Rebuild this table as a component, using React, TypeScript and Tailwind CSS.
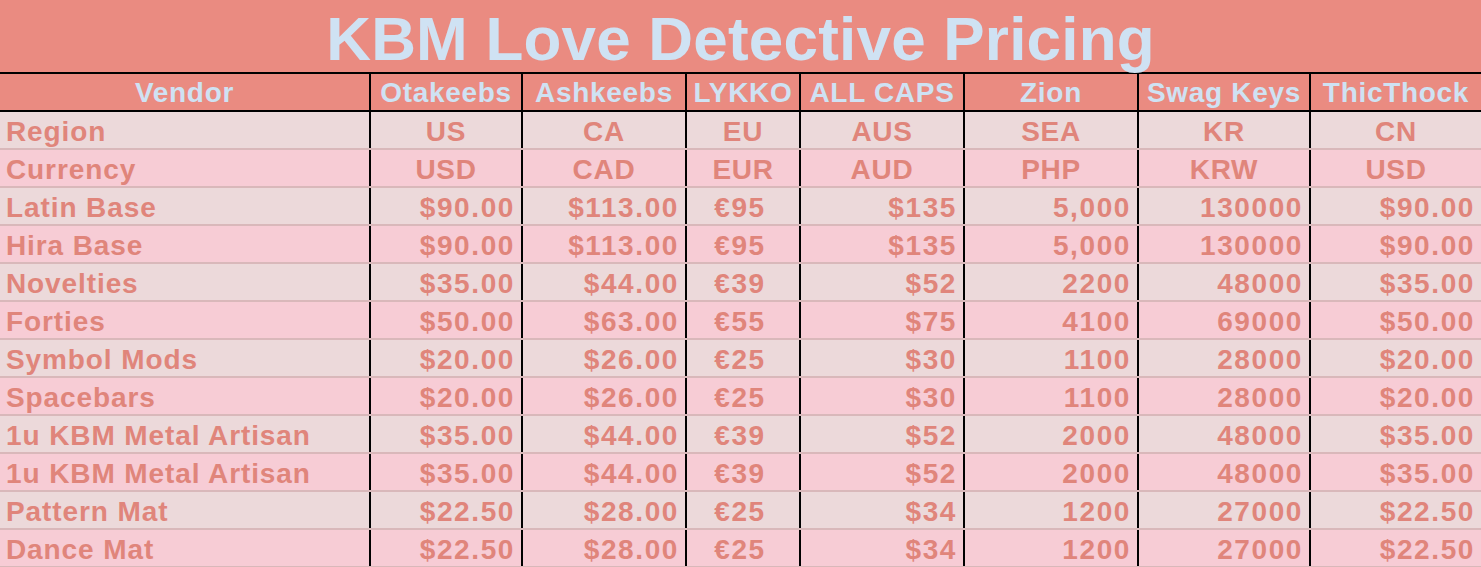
const vendors = ['Otakeebs', 'Ashkeebs', 'LYKKO', 'ALL CAPS', 'Zion', 'Swag Keys', 'ThicThock']

// widths include the 2px left border on every column after the first
const widths = ['w-[369px]', 'w-[152px]', 'w-[164px]', 'w-[114px]', 'w-[164px]', 'w-[174px]', 'w-[172px]', 'w-[172px]']

// how each vendor column lines up its prices
const priceAlign = ['justify-end', 'justify-end', 'justify-center', 'justify-end', 'justify-end', 'justify-end', 'justify-end']

const rows: { label: string; cells: string[]; centered?: boolean }[] = [
  { label: 'Region', cells: ['US', 'CA', 'EU', 'AUS', 'SEA', 'KR', 'CN'], centered: true },
  { label: 'Currency', cells: ['USD', 'CAD', 'EUR', 'AUD', 'PHP', 'KRW', 'USD'], centered: true },
  { label: 'Latin Base', cells: ['$90.00', '$113.00', '€95', '$135', '5,000', '130000', '$90.00'] },
  { label: 'Hira Base', cells: ['$90.00', '$113.00', '€95', '$135', '5,000', '130000', '$90.00'] },
  { label: 'Novelties', cells: ['$35.00', '$44.00', '€39', '$52', '2200', '48000', '$35.00'] },
  { label: 'Forties', cells: ['$50.00', '$63.00', '€55', '$75', '4100', '69000', '$50.00'] },
  { label: 'Symbol Mods', cells: ['$20.00', '$26.00', '€25', '$30', '1100', '28000', '$20.00'] },
  { label: 'Spacebars', cells: ['$20.00', '$26.00', '€25', '$30', '1100', '28000', '$20.00'] },
  { label: '1u KBM Metal Artisan', cells: ['$35.00', '$44.00', '€39', '$52', '2000', '48000', '$35.00'] },
  { label: '1u KBM Metal Artisan', cells: ['$35.00', '$44.00', '€39', '$52', '2000', '48000', '$35.00'] },
  { label: 'Pattern Mat', cells: ['$22.50', '$28.00', '€25', '$34', '1200', '27000', '$22.50'] },
  { label: 'Dance Mat', cells: ['$22.50', '$28.00', '€25', '$34', '1200', '27000', '$22.50'] },
]

export default function App() {
  return (
    <div className="w-[1481px] h-[567px] overflow-hidden bg-[#ecd9da] font-['Liberation_Sans',Arial,sans-serif] font-bold">
      <div className="h-[74px] flex items-center justify-center pt-[5px] bg-[#ea8b81] border-b-2 border-black">
        <h1 className="text-[62px] leading-none tracking-[0.2px] text-[#cfe2f3]">KBM Love Detective Pricing</h1>
      </div>

      <div className="flex h-[38px] bg-[#ea8b81] border-b-2 border-black text-[28px] tracking-[0.7px] text-[#cfe2f3]">
        <div className={`${widths[0]} shrink-0 flex items-center justify-center pt-[2px]`}>Vendor</div>
        {vendors.map((v, i) => (
          <div key={v} className={`${widths[i + 1]} shrink-0 flex items-center justify-center pt-[2px] border-l-2 border-black whitespace-nowrap`}>
            {v}
          </div>
        ))}
      </div>

      {rows.map((row, r) => (
        <div
          key={r}
          className={`flex h-[38px] border-b-2 border-[#d9b8ba] text-[28px] text-[#e0857b] ${r % 2 === 0 ? 'bg-[#ecd9da]' : 'bg-[#f7ccd5]'}`}
        >
          <div className={`${widths[0]} shrink-0 flex items-center pl-[6px] pt-[3px] tracking-[0.9px]`}>{row.label}</div>
          {row.cells.map((c, i) => (
            <div
              key={i}
              className={`${widths[i + 1]} shrink-0 flex items-center pt-[3px] border-l-2 border-black whitespace-nowrap ${
                row.centered ? 'justify-center px-[7px] tracking-[0.7px]' : `${priceAlign[i]} pr-[6px] tracking-[1.6px]`
              }`}
            >
              {c}
            </div>
          ))}
        </div>
      ))}
    </div>
  )
}
